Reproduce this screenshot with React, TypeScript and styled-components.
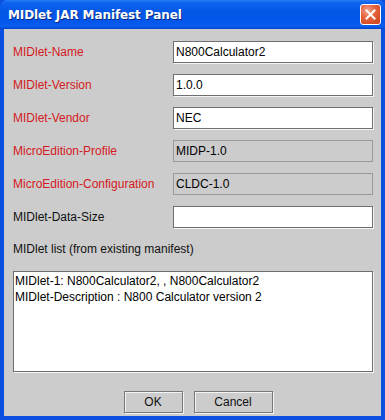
import React from "react";
import styled, { createGlobalStyle } from "styled-components";

const Global = createGlobalStyle`
  html, body { margin: 0; padding: 0; background: #ffffff; }
  body { font-family: "Liberation Sans", Arial, sans-serif; }
  * { box-sizing: border-box; }
`;

const Window = styled.div`
  width: 385px;
  height: 420px;
  display: flex;
  flex-direction: column;
  background: #0a4fe0;
`;

const TitleBar = styled.div`
  height: 29px;
  flex: none;
  display: flex;
  align-items: center;
  justify-content: space-between;
  padding: 0 4px 0 8px;
  border-radius: 7px 7px 0 0;
  background: linear-gradient(
    #2a7cf6 0%,
    #0d63ef 10%,
    #0458e6 40%,
    #0256ea 75%,
    #0a5ff0 90%,
    #0044cc 100%
  );
`;

const Title = styled.span`
  font-family: "DejaVu Sans", Verdana, sans-serif;
  font-weight: bold;
  font-size: 12px;
  letter-spacing: -0.1px;
  color: #ffffff;
  text-shadow: 1px 1px 0 #0a2a80;
`;

const CloseButton = styled.div`
  width: 21px;
  height: 21px;
  border: 1px solid #ffffff;
  border-radius: 3px;
  background: radial-gradient(circle at 35% 30%, #f2a38a 0%, #e5603a 45%, #c9401f 100%);
  display: flex;
  align-items: center;
  justify-content: center;
`;

const Body = styled.div`
  flex: 1;
  margin: 0 4px 4px 4px;
  background: #cccccc;
  padding: 12px 8px 3px 9px;
  display: flex;
  flex-direction: column;
`;

const Form = styled.div`
  display: flex;
  flex-direction: column;
  gap: 11px;
`;

const Row = styled.div`
  display: flex;
  align-items: center;
  height: 22px;
`;

const Label = styled.span<{ $required?: boolean }>`
  width: 160px;
  flex: none;
  font-size: 12px;
  color: ${(p) => (p.$required ? "#d41a22" : "#111111")};
`;

const Field = styled.div<{ $readOnly?: boolean }>`
  flex: 1;
  height: 22px;
  display: flex;
  align-items: center;
  padding-left: 2px;
  font-size: 12px;
  color: #000000;
  background: ${(p) => (p.$readOnly ? "#cccccc" : "#ffffff")};
  border: 1px solid ${(p) => (p.$readOnly ? "#9a9a9a" : "#6f6f6f")};
  box-shadow: ${(p) => (p.$readOnly ? "none" : "1px 1px 0 #f4f4f4")};
`;

const ListLabel = styled.div`
  margin-top: 13px;
  height: 16px;
  line-height: 16px;
  font-size: 12px;
  color: #111111;
`;

const TextArea = styled.div`
  margin-top: 14px;
  height: 101px;
  background: #ffffff;
  border: 1px solid #6f6f6f;
  box-shadow: 1px 1px 0 #f4f4f4;
  padding: 1px 0 0 1px;
  font-size: 12px;
  line-height: 16px;
  color: #000000;
`;

const ButtonBar = styled.div`
  margin-top: 19px;
  display: flex;
  justify-content: center;
  gap: 11px;
  padding-left: 10px;
`;

const Button = styled.div<{ $w: number }>`
  width: ${(p) => p.$w}px;
  height: 22px;
  display: flex;
  align-items: center;
  justify-content: center;
  font-size: 12px;
  color: #111111;
  background: #cccccc;
  border: 1px solid #777777;
  box-shadow: inset 1px 1px 0 #f4f4f4, 1px 1px 0 #f4f4f4;
`;

const fields: { label: string; value: string; required: boolean; readOnly?: boolean }[] = [
  { label: "MIDlet-Name", value: "N800Calculator2", required: true },
  { label: "MIDlet-Version", value: "1.0.0", required: true },
  { label: "MIDlet-Vendor", value: "NEC", required: true },
  { label: "MicroEdition-Profile", value: "MIDP-1.0", required: true, readOnly: true },
  { label: "MicroEdition-Configuration", value: "CLDC-1.0", required: true, readOnly: true },
  { label: "MIDlet-Data-Size", value: "", required: false },
];

export default function App() {
  return (
    <>
      <Global />
      <Window>
        <TitleBar>
          <Title>MIDlet JAR Manifest Panel</Title>
          <CloseButton>
            <svg width="11" height="11" viewBox="0 0 11 11">
              <path d="M1.5 1.5 L9.5 9.5 M9.5 1.5 L1.5 9.5" stroke="#ffffff" strokeWidth="2" strokeLinecap="square" />
            </svg>
          </CloseButton>
        </TitleBar>
        <Body>
          <Form>
            {fields.map((f) => (
              <Row key={f.label}>
                <Label $required={f.required}>{f.label}</Label>
                <Field $readOnly={f.readOnly}>{f.value}</Field>
              </Row>
            ))}
          </Form>
          <ListLabel>MIDlet list (from existing manifest)</ListLabel>
          <TextArea>
            <div>MIDlet-1: N800Calculator2, , N800Calculator2</div>
            <div>MIDlet-Description : N800 Calculator version 2</div>
          </TextArea>
          <ButtonBar>
            <Button $w={59}>OK</Button>
            <Button $w={79}>Cancel</Button>
          </ButtonBar>
        </Body>
      </Window>
    </>
  );
}
